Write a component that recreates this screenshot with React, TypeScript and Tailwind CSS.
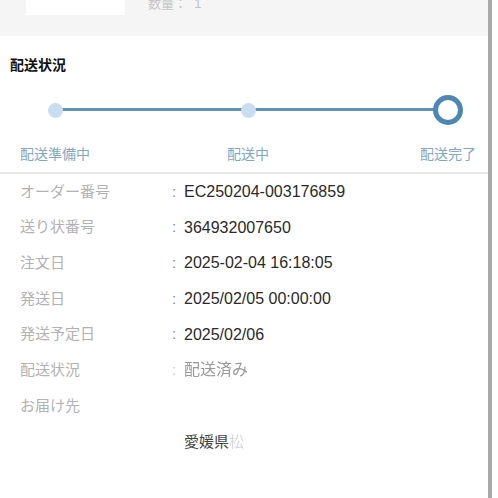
import React from "react";

const rows: { label: string; value: string; faint?: boolean }[] = [
  { label: "オーダー番号", value: "EC250204-003176859" },
  { label: "送り状番号", value: "364932007650" },
  { label: "注文日", value: "2025-02-04 16:18:05" },
  { label: "発送日", value: "2025/02/05 00:00:00" },
  { label: "発送予定日", value: "2025/02/06" },
  { label: "配送状況", value: "配送済み", faint: true },
];

const jp = { fontFamily: '"Liberation Sans", "Noto Sans CJK JP", sans-serif' };

export default function App() {
  return (
    <div className="w-[498px] h-[498px] flex bg-white overflow-hidden" style={jp}>
      <div className="w-[488px] shrink-0 flex flex-col">
        {/* top grey band */}
        <div className="h-[36px] bg-[#f5f5f5] flex items-start">
          <div className="ml-[26px] w-[99px] h-[15px] bg-white" />
          <div className="ml-[23px] -mt-[5px] text-[13px] leading-[18px] text-[#c4c4c4]">数量：&nbsp;&nbsp;1</div>
        </div>

        {/* title */}
        <div className="pl-[10px] pt-[20px] h-[59px] text-[14px] leading-[18px] font-bold text-[#111]">配送状況</div>

        {/* timeline */}
        <div className="relative flex items-start pl-[20px] h-[77px]">
          <div className="absolute left-[55px] w-[393px] top-[14px] h-[3px] -mt-[1px] bg-[#5f92ba]" />
          <div className="flex flex-col items-center w-[70px]">
            <div className="h-[30px] flex items-center">
              <div className="relative w-[15px] h-[15px] rounded-full bg-[#c8def0]" />
            </div>
            <div className="mt-[19px] text-[14px] leading-[20px] text-[#80a8c6]">配送準備中</div>
          </div>
          <div className="flex flex-col items-center w-[42px] ml-[137px]">
            <div className="h-[30px] flex items-center">
              <div className="relative w-[15px] h-[15px] rounded-full bg-[#c8def0]" />
            </div>
            <div className="mt-[19px] text-[14px] leading-[20px] text-[#80a8c6] whitespace-nowrap">配送中</div>
          </div>
          <div className="flex flex-col items-center w-[56px] ml-[151px]">
            <div className="h-[30px] flex items-center">
              <div className="relative w-[30px] h-[30px] rounded-full border-[5px] border-[#4d88b4] bg-white" />
            </div>
            <div className="mt-[19px] text-[14px] leading-[20px] text-[#80a8c6] whitespace-nowrap">配送完了</div>
          </div>
        </div>

        <div className="h-[2px] bg-[#e9e9e9]" />

        {/* details */}
        <div className="flex flex-col">
          {rows.map((r) => (
            <div key={r.label} className="h-[35.7px] flex items-center">
              <div className="w-[172px] pl-[20px] text-[15px] text-[#b2b2b2]">{r.label}</div>
              <div className={`w-[12px] text-[15px] ${r.faint ? "text-[#d0d0d0]" : "text-[#888]"}`}>:</div>
              <div className={`text-[16px] ${r.faint ? "text-[#9a9a9a] blur-[0.4px]" : "text-[#2a2a2a]"}`}>{r.value}</div>
            </div>
          ))}
          <div className="h-[35.7px] flex items-center">
            <div className="w-[172px] pl-[20px] text-[15px] text-[#b2b2b2]">お届け先</div>
          </div>
          <div className="h-[36px] flex items-center pl-[184px] text-[15px]">
            <span className="text-[#444]">愛媛県</span>
            <span className="text-[#d8d8d8] blur-[0.6px]">松</span>
          </div>
        </div>
      </div>
      {/* scrollbar edge */}
      <div className="w-[4px] shrink-0 bg-[#a9a9a9]" />
      <div className="flex-1 bg-white" />
    </div>
  );
}
